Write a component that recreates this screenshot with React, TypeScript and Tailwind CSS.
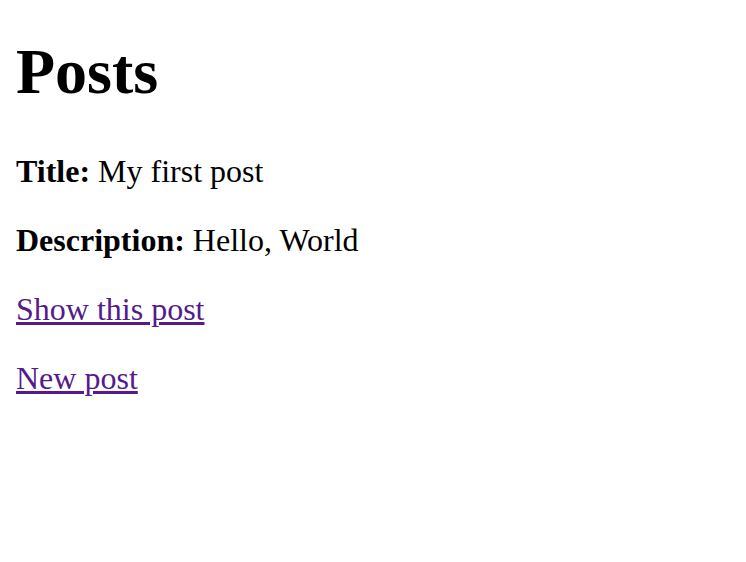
export default function App() {
  return (
    <div className="min-h-screen bg-white px-4 pt-[35px] font-['Liberation_Serif',serif] text-[32px] leading-[37px] text-black">
      <h1 className="text-[64px] leading-[74px] font-bold">Posts</h1>

      <div className="mt-[44px] space-y-[32px]">
        <p>
          <strong>Title:</strong> My first post
        </p>
        <p>
          <strong>Description:</strong> Hello, World
        </p>
        <p>
          <a href="#" className="text-[#551a8b] underline">
            Show this post
          </a>
        </p>
        <p>
          <a href="#" className="text-[#551a8b] underline">
            New post
          </a>
        </p>
      </div>
    </div>
  );
}
